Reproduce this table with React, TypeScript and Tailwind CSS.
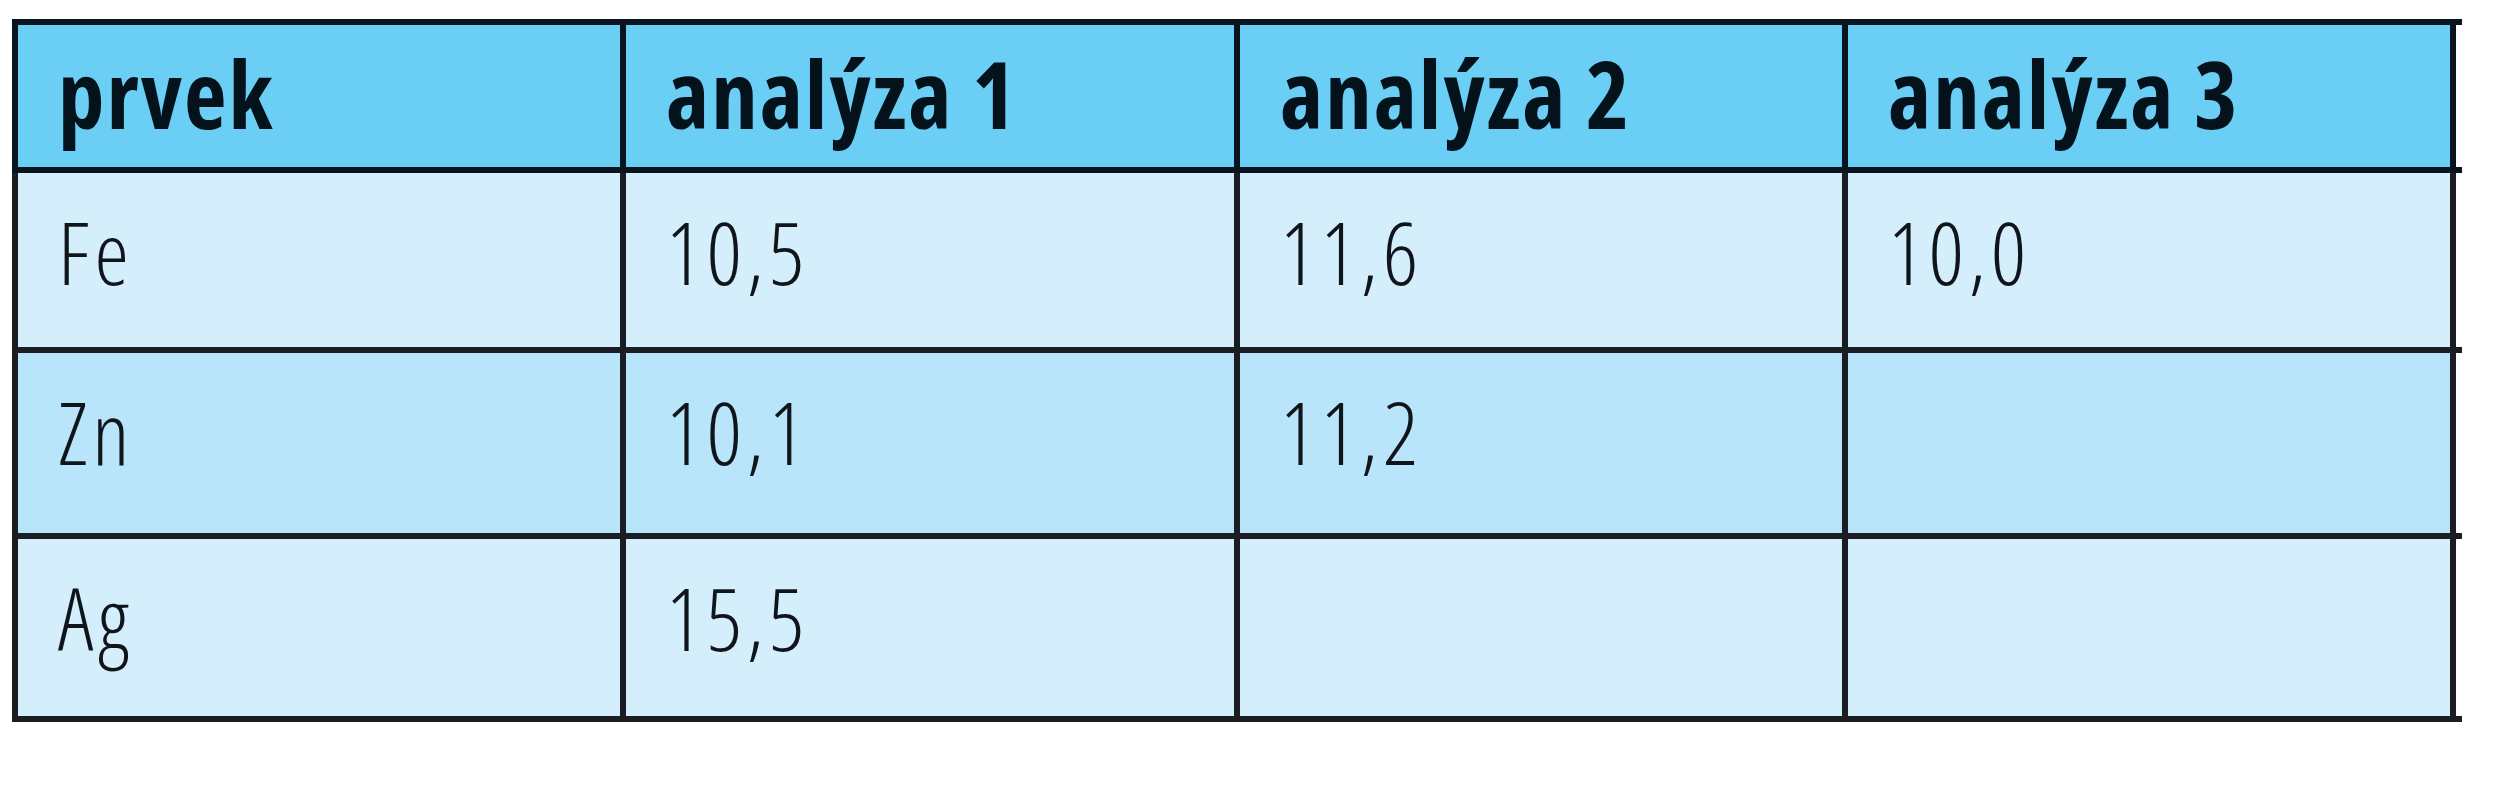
const rows: { bg: string; h: string; cells: string[] }[] = [
  { bg: "bg-[#d5eefb]", h: "h-[180px]", cells: ["Fe", "10,5", "11,6", "10,0"] },
  { bg: "bg-[#b8e5f9]", h: "h-[186px]", cells: ["Zn", "10,1", "11,2", ""] },
  { bg: "bg-[#d5eefb]", h: "h-[183px]", cells: ["Ag", "15,5", "", ""] },
];

const widths = ["w-[608px]", "w-[614px]", "w-[608px]", "w-[614px]"];
const header = ["prvek", "analýza 1", "analýza 2", "analýza 3"];

export default function App() {
  return (
    <div className="min-h-[800px] bg-white pt-[19px] pl-[12px]">
      <div className="w-[2450px] border-t-[6px] border-[#08151f]">
        <div className="flex h-[148px] border-b-[6px] border-[#08151f]">
          {header.map((t, i) => (
            <div
              key={i}
              className={`${widths[i]} shrink-0 border-l-[6px] border-[#08151f] bg-[#6bcef5] pl-[40px] pt-[22px] font-['Open_Sans',sans-serif] text-[93px] leading-none font-bold font-stretch-condensed tracking-[2px] text-[#04121c] ${i === 3 ? "border-r-[6px]" : ""}`}
            >
              {t}
            </div>
          ))}
        </div>
        {rows.map((r, ri) => (
          <div key={ri} className={`flex ${r.h} border-b-[6px] border-[#1a1e23]`}>
            {r.cells.map((c, i) => (
              <div
                key={i}
                className={`${widths[i]} shrink-0 border-l-[6px] border-[#1a1e23] ${r.bg} pl-[40px] pt-[35px] font-['Open_Sans',sans-serif] text-[87px] leading-none font-light font-stretch-condensed tracking-[5px] text-[#10151b] ${i === 3 ? "border-r-[6px]" : ""}`}
              >
                {c}
              </div>
            ))}
          </div>
        ))}
      </div>
    </div>
  );
}
